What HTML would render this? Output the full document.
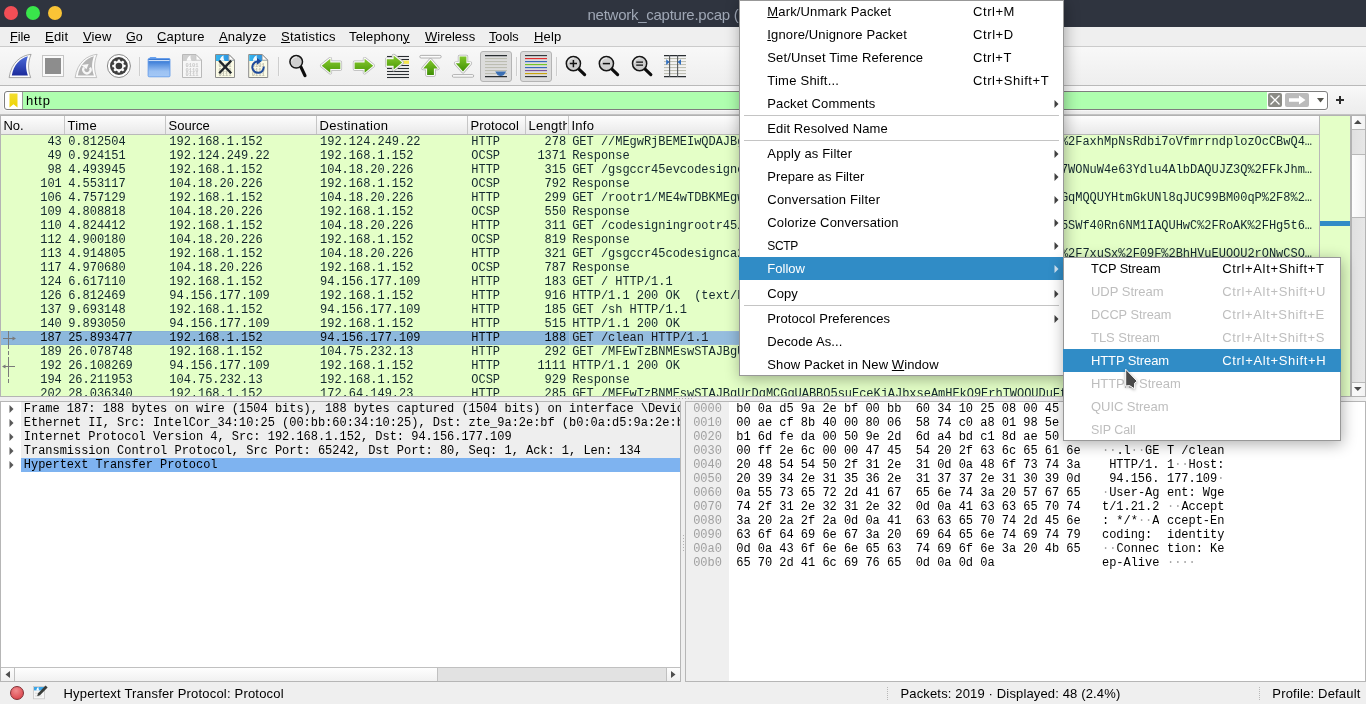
<!DOCTYPE html>
<html><head><meta charset="utf-8"><title>Wireshark</title>
<style>
html,body{margin:0;padding:0}
body{width:1366px;height:704px;overflow:hidden;position:relative;background:#efefef;will-change:transform;font-family:"Liberation Sans",sans-serif;font-size:13px;color:#000}
div,span,svg{position:absolute;box-sizing:border-box}
.t{white-space:pre;line-height:16px;height:16px}
.t u{text-decoration:underline;text-underline-offset:1px;text-decoration-thickness:1px}
.m{font-family:"Liberation Mono",monospace;font-size:12px;letter-spacing:-0.027px;line-height:14px;height:14px;white-space:pre;overflow:hidden}
.row{left:1px;width:1318px;height:14px;background:#e4ffc7;color:#12272e}
.row .m{top:0}
.m i{font-style:normal;color:#a4a4a4}
.hd{top:0;height:18px;border-right:1px solid #c4c4c4}
</style></head><body>

<div style="left:0;top:0;width:1366px;height:27px;background:#2f343f"></div>
<div style="left:4px;top:6px;width:14px;height:14px;border-radius:7px;background:#f24e56"></div>
<div style="left:26px;top:6px;width:14px;height:14px;border-radius:7px;background:#39e64b"></div>
<div style="left:48px;top:6px;width:14px;height:14px;border-radius:7px;background:#fac436"></div>
<div class="t" style="left:587.5px;top:5px;font-size:15px;line-height:20px;height:20px;letter-spacing:-0.263px;color:#9fa7b5">network_capture.pcap (</div>
<div style="left:0;top:27px;width:1366px;height:19px;background:#efefef"></div>
<div style="left:0;top:46px;width:1366px;height:1px;background:#cbcbcb"></div>
<div class="t" style="left:10.00px;top:28.50px;font-size:12.75px;letter-spacing:-0.113px;color:#000;"><u>F</u>ile</div>
<div class="t" style="left:45.00px;top:28.50px;letter-spacing:0.207px;color:#000;"><u>E</u>dit</div>
<div class="t" style="left:83.00px;top:28.50px;letter-spacing:0.129px;color:#000;"><u>V</u>iew</div>
<div class="t" style="left:126.00px;top:29.00px;font-size:12.5px;letter-spacing:-0.016px;color:#000;"><u>G</u>o</div>
<div class="t" style="left:157.00px;top:28.50px;letter-spacing:0.210px;color:#000;"><u>C</u>apture</div>
<div class="t" style="left:219.00px;top:28.50px;letter-spacing:0.147px;color:#000;"><u>A</u>nalyze</div>
<div class="t" style="left:281.00px;top:28.50px;letter-spacing:0.283px;color:#000;"><u>S</u>tatistics</div>
<div class="t" style="left:349.00px;top:28.50px;letter-spacing:0.156px;color:#000;">Telephon<u>y</u></div>
<div class="t" style="left:425.00px;top:28.50px;letter-spacing:0.045px;color:#000;"><u>W</u>ireless</div>
<div class="t" style="left:489.00px;top:28.50px;font-size:12.75px;letter-spacing:-0.041px;color:#000;"><u>T</u>ools</div>
<div class="t" style="left:534.00px;top:28.50px;letter-spacing:0.156px;color:#000;"><u>H</u>elp</div>
<div style="left:0;top:47px;width:1366px;height:38px;background:linear-gradient(#f8f8f8,#eeeeee)"></div>
<div style="left:0;top:85px;width:1366px;height:1px;background:#b9b9b9"></div>
<svg style="left:0;top:47px" width="700" height="38" viewBox="0 47 700 38"><defs><linearGradient id="gb" x1="0" y1="0" x2="0" y2="1"><stop offset="0" stop-color="#4b6ad8"/><stop offset="1" stop-color="#1b2b9c"/></linearGradient><linearGradient id="gf" x1="0" y1="0" x2="0" y2="1"><stop offset="0" stop-color="#3b7ad4"/><stop offset="0.16" stop-color="#3d7ed8"/><stop offset="0.7" stop-color="#9cc2f3"/><stop offset="1" stop-color="#a4c8f6"/></linearGradient><linearGradient id="ga" x1="0" y1="0" x2="0" y2="1"><stop offset="0" stop-color="#86c92e"/><stop offset="1" stop-color="#4c9a08"/></linearGradient><linearGradient id="gv" x1="0" y1="0" x2="0" y2="1"><stop offset="0" stop-color="#7fc62a"/><stop offset="1" stop-color="#3f8f05"/></linearGradient><linearGradient id="gh" x1="0" y1="0" x2="1" y2="0"><stop offset="0" stop-color="#35b6ee"/><stop offset="1" stop-color="#2a86dc"/></linearGradient></defs><path d="M31.1 54.3 C21 55.5 11.5 62 9.1 77.6 L30.7 77.6 C27.8 70 27.8 62 31.1 54.3Z" fill="#fcfcfc" stroke="#8f8f8f" stroke-width="0.8"/><path d="M27.9 56.3 C20 58.5 13.6 65 11.8 75.4 L27.9 75.4 C25.6 69 25.4 63 27.9 56.3Z" fill="url(#gb)"/><rect x="42.5" y="55.5" width="21" height="21" fill="#fafafa" stroke="#c4c4c4" stroke-width="1"/><rect x="45" y="58" width="16" height="16" fill="#8d8d8d"/><path d="M97.1 54.3 C87 55.5 77.5 62 75.1 77.6 L96.7 77.6 C93.8 70 93.8 62 97.1 54.3Z" fill="#fcfcfc" stroke="#b4b4b4" stroke-width="0.8"/><path d="M93.9 56.3 C86 58.5 79.6 65 77.8 75.4 L93.9 75.4 C91.6 69 91.4 63 93.9 56.3Z" fill="#b4b4b4"/><path d="M90.0 67.6A3.7 3.7 0 1 1 83.9 67.5" fill="none" stroke="#f8f8f8" stroke-width="2.2"/><path d="M81.4 65.1L88.6 63.9L86.5 69.2z" fill="#f8f8f8"/><circle cx="118.9" cy="66" r="11.5" fill="#fdfdfd" stroke="#7c7c7c" stroke-width="0.9"/><circle cx="118.9" cy="66" r="8.9" fill="#3f3f3f"/><rect x="117.65" y="59.4" width="2.5" height="3" rx="0.5" fill="#fafafa" transform="rotate(0 118.9 66)"/><rect x="117.65" y="59.4" width="2.5" height="3" rx="0.5" fill="#fafafa" transform="rotate(45 118.9 66)"/><rect x="117.65" y="59.4" width="2.5" height="3" rx="0.5" fill="#fafafa" transform="rotate(90 118.9 66)"/><rect x="117.65" y="59.4" width="2.5" height="3" rx="0.5" fill="#fafafa" transform="rotate(135 118.9 66)"/><rect x="117.65" y="59.4" width="2.5" height="3" rx="0.5" fill="#fafafa" transform="rotate(180 118.9 66)"/><rect x="117.65" y="59.4" width="2.5" height="3" rx="0.5" fill="#fafafa" transform="rotate(225 118.9 66)"/><rect x="117.65" y="59.4" width="2.5" height="3" rx="0.5" fill="#fafafa" transform="rotate(270 118.9 66)"/><rect x="117.65" y="59.4" width="2.5" height="3" rx="0.5" fill="#fafafa" transform="rotate(315 118.9 66)"/><circle cx="118.9" cy="66" r="5.2" fill="#fafafa"/><circle cx="118.9" cy="66" r="3.3" fill="#3a3a3a"/><path d="M139.5 57v19" stroke="#cecece" stroke-width="1"/><path d="M140.5 57v19" stroke="#f6f6f6" stroke-width="1"/><path d="M149.6 58.6v-0.6q0-0.9 0.9-0.9h5q0.9 0 0.9 0.9v0.6z" fill="#6aa3ee"/><rect x="148.1" y="58.5" width="21.9" height="18.3" rx="1" fill="url(#gf)" stroke="#5b97ea" stroke-width="0.8"/><path d="M148.6 60.6h20.9" stroke="#eef5fd" stroke-width="0.9"/><path d="M182.5 54.5h13.5l5.5 5.5v17.5h-19z" fill="#f6f6f6" stroke="#b9b9b9" stroke-width="1"/><path d="M183 55h13l0 5.5h5v-0.3l-5.3-5.2z" fill="none"/><path d="M183 55h12.8v5.7h5.2v0.3h-18z" fill="#cfcfcf"/><path d="M196 54.8v5.4h5.4z" fill="#fdfdfd" stroke="#b9b9b9" stroke-width="0.7"/><path d="M190.5 55.2c-2.2 1-3.4 3-3.9 5.6h5c-1-1.8-1.2-3.6-1.1-5.6z" fill="#fff" opacity="0.95"/><text x="185.6" y="67.2" font-family="Liberation Mono" font-size="5.2" font-weight="bold" fill="#c8c8c8" textLength="13" lengthAdjust="spacingAndGlyphs">0101</text><text x="185.6" y="71.8" font-family="Liberation Mono" font-size="5.2" font-weight="bold" fill="#c8c8c8" textLength="13" lengthAdjust="spacingAndGlyphs">0110</text><text x="185.6" y="76.4" font-family="Liberation Mono" font-size="5.2" font-weight="bold" fill="#c8c8c8" textLength="13" lengthAdjust="spacingAndGlyphs">0111</text><path d="M215.5 54.5h13.5l5.5 5.5v17.5h-19z" fill="#fbfbe6" stroke="#8a8a8a" stroke-width="1"/><path d="M216 55h13l0 5.5h5v-0.3l-5.3-5.2z" fill="none"/><path d="M216 55h12.8v5.7h5.2v0.3h-18z" fill="url(#gh)"/><path d="M229 54.8v5.4h5.4z" fill="#fdfdfd" stroke="#8a8a8a" stroke-width="0.7"/><path d="M223.5 55.2c-2.2 1-3.4 3-3.9 5.6h5c-1-1.8-1.2-3.6-1.1-5.6z" fill="#fff" opacity="0.95"/><text x="218.6" y="67.2" font-family="Liberation Mono" font-size="5.2" font-weight="bold" fill="#b8b8a8" textLength="13" lengthAdjust="spacingAndGlyphs">0101</text><text x="218.6" y="71.8" font-family="Liberation Mono" font-size="5.2" font-weight="bold" fill="#b8b8a8" textLength="13" lengthAdjust="spacingAndGlyphs">0110</text><text x="218.6" y="76.4" font-family="Liberation Mono" font-size="5.2" font-weight="bold" fill="#b8b8a8" textLength="13" lengthAdjust="spacingAndGlyphs">0111</text><path d="M219.2 60.6l12 12.6M231.2 60.6l-12 12.6" stroke="#20262b" stroke-width="2.3"/><path d="M248.7 54.5h13.5l5.5 5.5v17.5h-19z" fill="#fbfbe6" stroke="#8a8a8a" stroke-width="1"/><path d="M249.2 55h13l0 5.5h5v-0.3l-5.3-5.2z" fill="none"/><path d="M249.2 55h12.8v5.7h5.2v0.3h-18z" fill="url(#gh)"/><path d="M262.2 54.8v5.4h5.4z" fill="#fdfdfd" stroke="#8a8a8a" stroke-width="0.7"/><path d="M256.7 55.2c-2.2 1-3.4 3-3.9 5.6h5c-1-1.8-1.2-3.6-1.1-5.6z" fill="#fff" opacity="0.95"/><text x="251.79999999999998" y="67.2" font-family="Liberation Mono" font-size="5.2" font-weight="bold" fill="#b8b8a8" textLength="13" lengthAdjust="spacingAndGlyphs">0101</text><text x="251.79999999999998" y="71.8" font-family="Liberation Mono" font-size="5.2" font-weight="bold" fill="#b8b8a8" textLength="13" lengthAdjust="spacingAndGlyphs">0110</text><text x="251.79999999999998" y="76.4" font-family="Liberation Mono" font-size="5.2" font-weight="bold" fill="#b8b8a8" textLength="13" lengthAdjust="spacingAndGlyphs">0111</text><path d="M263.7 66.6A5.7 5.7 0 1 1 257.4 61.5" fill="none" stroke="#1d4a9c" stroke-width="2"/><path d="M257 58.1l4.6 3.2-4.6 3.4z" fill="#1d4a9c"/><path d="M278.5 57v19" stroke="#cecece" stroke-width="1"/><path d="M279.5 57v19" stroke="#f6f6f6" stroke-width="1"/><path d="M300.61 66.34L305 75.6" stroke="#0c0c0c" stroke-width="3.2" stroke-linecap="round"/><circle cx="296.2" cy="61.8" r="6.3" fill="#cfcfcf" stroke="#151515" stroke-width="1.5"/><path d="M291.70 61.20a4.50 4.50 0 0 1 5.30 -4.10" fill="none" stroke="#f2f2f2" stroke-width="1" opacity="0.9"/><path d="M340.30 62.40 L330.30 62.40 L330.30 58.70 L321.70 65.70 L330.30 72.70 L330.30 69.00 L340.30 69.00Z" fill="none" stroke="#b5b5b5" stroke-width="3.6" stroke-linejoin="round"/><path d="M340.30 62.40 L330.30 62.40 L330.30 58.70 L321.70 65.70 L330.30 72.70 L330.30 69.00 L340.30 69.00Z" fill="url(#ga)" stroke="#fafafa" stroke-width="2.2" stroke-linejoin="round"/><path d="M340.30 62.40 L330.30 62.40 L330.30 58.70 L321.70 65.70 L330.30 72.70 L330.30 69.00 L340.30 69.00Z" fill="url(#ga)"/><path d="M354.60 62.40 L364.60 62.40 L364.60 58.70 L373.20 65.70 L364.60 72.70 L364.60 69.00 L354.60 69.00Z" fill="none" stroke="#b5b5b5" stroke-width="3.6" stroke-linejoin="round"/><path d="M354.60 62.40 L364.60 62.40 L364.60 58.70 L373.20 65.70 L364.60 72.70 L364.60 69.00 L354.60 69.00Z" fill="url(#ga)" stroke="#fafafa" stroke-width="2.2" stroke-linejoin="round"/><path d="M354.60 62.40 L364.60 62.40 L364.60 58.70 L373.20 65.70 L364.60 72.70 L364.60 69.00 L354.60 69.00Z" fill="url(#ga)"/><path d="M387 56.5h22" stroke="#2a2e32" stroke-width="1.1"/><path d="M387 59.5h22" stroke="#2a2e32" stroke-width="1.1"/><path d="M387 62.5h22" stroke="#2a2e32" stroke-width="1.1"/><path d="M387 65.5h22" stroke="#2a2e32" stroke-width="1.1"/><path d="M387 68.5h22" stroke="#2a2e32" stroke-width="1.1"/><path d="M387 71.5h22" stroke="#2a2e32" stroke-width="1.1"/><path d="M387 74.5h22" stroke="#2a2e32" stroke-width="1.1"/><path d="M387 77.5h22" stroke="#2a2e32" stroke-width="1.1"/><rect x="401" y="60.6" width="8" height="3.2" fill="#f5e54a"/><path d="M386.80 59.20 L393.60 59.20 L393.60 55.50 L402.20 62.50 L393.60 69.50 L393.60 65.80 L386.80 65.80Z" fill="none" stroke="#b5b5b5" stroke-width="3.6" stroke-linejoin="round"/><path d="M386.80 59.20 L393.60 59.20 L393.60 55.50 L402.20 62.50 L393.60 69.50 L393.60 65.80 L386.80 65.80Z" fill="url(#ga)" stroke="#fafafa" stroke-width="2.2" stroke-linejoin="round"/><path d="M386.80 59.20 L393.60 59.20 L393.60 55.50 L402.20 62.50 L393.60 69.50 L393.60 65.80 L386.80 65.80Z" fill="url(#ga)"/><rect x="419.8" y="55.4" width="21.4" height="2.6" rx="1.3" fill="#fcfcfc" stroke="#9e9e9e" stroke-width="0.8"/><path d="M427.10 75.00 L427.10 68.40 L423.20 68.40 L430.50 60.00 L437.80 68.40 L433.90 68.40 L433.90 75.00Z" fill="none" stroke="#b0b0b0" stroke-width="3.6" stroke-linejoin="round"/><path d="M427.10 75.00 L427.10 68.40 L423.20 68.40 L430.50 60.00 L437.80 68.40 L433.90 68.40 L433.90 75.00Z" fill="url(#gv)" stroke="#fafafa" stroke-width="2.2" stroke-linejoin="round"/><path d="M427.10 75.00 L427.10 68.40 L423.20 68.40 L430.50 60.00 L437.80 68.40 L433.90 68.40 L433.90 75.00Z" fill="url(#gv)"/><rect x="452.3" y="74.6" width="21.4" height="2.6" rx="1.3" fill="#fcfcfc" stroke="#9e9e9e" stroke-width="0.8"/><path d="M459.60 56.60 L459.60 63.20 L455.70 63.20 L463.00 71.60 L470.30 63.20 L466.40 63.20 L466.40 56.60Z" fill="none" stroke="#b0b0b0" stroke-width="3.6" stroke-linejoin="round"/><path d="M459.60 56.60 L459.60 63.20 L455.70 63.20 L463.00 71.60 L470.30 63.20 L466.40 63.20 L466.40 56.60Z" fill="url(#gv)" stroke="#fafafa" stroke-width="2.2" stroke-linejoin="round"/><path d="M459.60 56.60 L459.60 63.20 L455.70 63.20 L463.00 71.60 L470.30 63.20 L466.40 63.20 L466.40 56.60Z" fill="url(#gv)"/><rect x="480.5" y="51.5" width="31" height="30" rx="2.5" fill="#dcdcdc" stroke="#b4b4b4" stroke-width="1"/><path d="M485 55.6h22M485 76.6h22" stroke="#2a2e32" stroke-width="1.1"/><path d="M485 58.6h22" stroke="#b9baae" stroke-width="1"/><path d="M485 61.6h22" stroke="#b9baae" stroke-width="1"/><path d="M485 64.6h22" stroke="#b9baae" stroke-width="1"/><path d="M485 67.6h22" stroke="#b9baae" stroke-width="1"/><path d="M485 70.6h22" stroke="#b9baae" stroke-width="1"/><path d="M485 73.6h22" stroke="#b9baae" stroke-width="1"/><path d="M495.2 71.4h11l-2.4 3.6q-3.1 2-6.2 0z" fill="#3a6fb4"/><path d="M516.5 57v19" stroke="#cecece" stroke-width="1"/><path d="M517.5 57v19" stroke="#f6f6f6" stroke-width="1"/><rect x="520.5" y="51.5" width="31" height="30" rx="2.5" fill="#dcdcdc" stroke="#b4b4b4" stroke-width="1"/><path d="M525 55.6h22" stroke="#2a2e32" stroke-width="1.1"/><path d="M525 58.6h22" stroke="#e02424" stroke-width="1.1"/><path d="M525 61.6h22" stroke="#2f62b8" stroke-width="1.1"/><path d="M525 64.6h22" stroke="#6cc41c" stroke-width="1.1"/><path d="M525 67.6h22" stroke="#2f62b8" stroke-width="1.1"/><path d="M525 70.6h22" stroke="#774c98" stroke-width="1.1"/><path d="M525 73.6h22" stroke="#c8a000" stroke-width="1.1"/><path d="M525 76.6h22" stroke="#2a2e32" stroke-width="1.1"/><path d="M556.5 57v19" stroke="#cecece" stroke-width="1"/><path d="M557.5 57v19" stroke="#f6f6f6" stroke-width="1"/><path d="M578.37 68.71L584.6 74.6" stroke="#0c0c0c" stroke-width="3.2" stroke-linecap="round"/><circle cx="573.4" cy="63.6" r="7.1" fill="#cfcfcf" stroke="#151515" stroke-width="1.5"/><path d="M568.10 63.00a5.30 5.30 0 0 1 6.10 -4.90" fill="none" stroke="#f2f2f2" stroke-width="1" opacity="0.9"/><path d="M569.8 63.6h7.2M573.4 60.0v7.2" stroke="#111" stroke-width="1.5"/><path d="M611.37 68.71L617.6 74.6" stroke="#0c0c0c" stroke-width="3.2" stroke-linecap="round"/><circle cx="606.4" cy="63.6" r="7.1" fill="#cfcfcf" stroke="#151515" stroke-width="1.5"/><path d="M601.10 63.00a5.30 5.30 0 0 1 6.10 -4.90" fill="none" stroke="#f2f2f2" stroke-width="1" opacity="0.9"/><path d="M602.8 63.6h7.2" stroke="#111" stroke-width="1.5"/><path d="M644.57 68.71L650.8 74.6" stroke="#0c0c0c" stroke-width="3.2" stroke-linecap="round"/><circle cx="639.6" cy="63.6" r="7.1" fill="#cfcfcf" stroke="#151515" stroke-width="1.5"/><path d="M634.30 63.00a5.30 5.30 0 0 1 6.10 -4.90" fill="none" stroke="#f2f2f2" stroke-width="1" opacity="0.9"/><path d="M636.2 62.1h6.8M636.2 65.1h6.8" stroke="#111" stroke-width="1.4"/><path d="M664 55.6h22M664 76.6h22" stroke="#2a2e32" stroke-width="1.1"/><path d="M664 58.6h22" stroke="#b9baae" stroke-width="1"/><path d="M664 61.6h22" stroke="#b9baae" stroke-width="1"/><path d="M664 64.6h22" stroke="#b9baae" stroke-width="1"/><path d="M664 67.6h22" stroke="#b9baae" stroke-width="1"/><path d="M664 70.6h22" stroke="#b9baae" stroke-width="1"/><path d="M664 73.6h22" stroke="#b9baae" stroke-width="1"/><path d="M669.6 55v22M677.6 55v22" stroke="#55595c" stroke-width="1.1"/><path d="M666.2 59.2l3.4 2.9-3.4 2.9zM681 59.2l-3.4 2.9 3.4 2.9z" fill="#2f6ec0"/></svg>
<div style="left:0;top:86px;width:1366px;height:28px;background:linear-gradient(#f9f9f9,#f3f3f3 40%,#ededed)"></div>
<div style="left:4px;top:91px;width:1324px;height:19px;border:1px solid #7e7e7e;border-radius:3px;background:#fff;overflow:hidden;box-shadow:0 0 0 1px rgba(255,255,255,0.55)"><div style="left:17px;top:0;width:1px;height:18px;background:#9a9a9a"></div><div style="left:18px;top:0;width:1244px;height:18px;background:#afffaf"></div><svg style="left:3.6px;top:1px" width="9" height="15" viewBox="0 0 9 15"><defs><linearGradient id="bk" x1="0" y1="0" x2="0" y2="1"><stop offset="0" stop-color="#f3de30"/><stop offset="1" stop-color="#efd300"/></linearGradient></defs><path d="M0.5 0.5h8v14l-4-3.2-4 3.2z" fill="url(#bk)"/></svg><div style="left:1263px;top:1px;width:14px;height:14px;border-radius:2px;background:#8b8b85"></div><svg style="left:1263px;top:1px" width="14" height="14" viewBox="0 0 14 14"><path d="M2.5 2.5l9 9M11.5 2.5l-9 9" stroke="#fff" stroke-width="1.3" fill="none"/></svg><div style="left:1280px;top:1px;width:24px;height:14px;border-radius:2px;background:#bbbbbb"></div><svg style="left:1280px;top:1px" width="24" height="14" viewBox="0 0 24 14"><path d="M4 5.2h10v-2.8l6.5 4.6-6.5 4.6v-2.8h-10z" fill="#fff"/></svg><svg style="left:1312px;top:6px" width="7" height="5" viewBox="0 0 7 5"><path d="M0 0h7l-3.5 4.4z" fill="#55554e"/></svg></div>
<div class="t" style="left:26.00px;top:92.50px;letter-spacing:0.738px;color:#000;">http</div>
<svg style="left:1336px;top:96px" width="8" height="8" viewBox="0 0 8 8"><path d="M4 0v8M0 4h8" stroke="#2e2e2e" stroke-width="2"/></svg>
<div style="left:0;top:114px;width:1366px;height:283px;background:#e4ffc7;border:1px solid #b4b4b4;border-top:none"></div>
<div style="left:0;top:114px;width:1366px;height:1px;background:#c2c2c2"></div>
<div style="left:0;top:115px;width:1366px;height:1px;background:#b2b2b2"></div>
<div style="left:1px;top:116px;width:1319px;height:19px;background:linear-gradient(#fdfdfd,#f3f3f3 50%,#e9e9e9);border-bottom:1px solid #b9b9b9"></div>
<div style="left:64px;top:116px;width:1px;height:18px;background:#c6c6c6"></div>
<div class="t" style="left:3.50px;top:117.50px;letter-spacing:-0.099px;color:#000;">No.</div>
<div style="left:165px;top:116px;width:1px;height:18px;background:#c6c6c6"></div>
<div class="t" style="left:67.50px;top:117.50px;letter-spacing:0.238px;color:#000;">Time</div>
<div style="left:316px;top:116px;width:1px;height:18px;background:#c6c6c6"></div>
<div class="t" style="left:168.50px;top:117.50px;letter-spacing:0.005px;color:#000;">Source</div>
<div style="left:467px;top:116px;width:1px;height:18px;background:#c6c6c6"></div>
<div class="t" style="left:319.50px;top:117.50px;letter-spacing:0.345px;color:#000;">Destination</div>
<div style="left:525px;top:116px;width:1px;height:18px;background:#c6c6c6"></div>
<div class="t" style="left:470.50px;top:117.50px;letter-spacing:0.082px;color:#000;">Protocol</div>
<div style="left:568px;top:116px;width:1px;height:18px;background:#c6c6c6"></div>
<div style="left:526px;top:116px;width:41px;height:19px;overflow:hidden"><div class="t" style="left:2.50px;top:1.50px;letter-spacing:0.273px;color:#000;">Length</div></div>
<div style="left:1319px;top:116px;width:1px;height:18px;background:#c6c6c6"></div>
<div class="t" style="left:571.50px;top:117.50px;letter-spacing:0.258px;color:#000;">Info</div>
<div class="row" style="top:135px;height:14px;overflow:hidden;">
<span class="m" style="left:0;width:60.8px;text-align:right">43</span>
<span class="m" style="left:67.2px">0.812504</span>
<span class="m" style="left:168.3px">192.168.1.152</span>
<span class="m" style="left:319.1px">192.124.249.22</span>
<span class="m" style="left:470.3px">HTTP</span>
<span class="m" style="left:520px;width:45.1px;text-align:right">278</span>
<span class="m" style="left:571.2px;width:480px">GET //MEgwRjBEMEIwQDAJBgUrDgMCGgUABBTfqhLjKLEJQZPin0KCzkdAQpVYowQUsT7DaQP4v0cB1Jg</span>
<span class="m" style="left:900px;width:411px;text-align:right">%2FaxhMpNsRdbi7oVfmrrndplozOcCBwQ4…</span>
</div>
<div class="row" style="top:149px;height:14px;overflow:hidden;">
<span class="m" style="left:0;width:60.8px;text-align:right">49</span>
<span class="m" style="left:67.2px">0.924151</span>
<span class="m" style="left:168.3px">192.124.249.22</span>
<span class="m" style="left:319.1px">192.168.1.152</span>
<span class="m" style="left:470.3px">OCSP</span>
<span class="m" style="left:520px;width:45.1px;text-align:right">1371</span>
<span class="m" style="left:571.2px;width:740px">Response</span>
</div>
<div class="row" style="top:163px;height:14px;overflow:hidden;">
<span class="m" style="left:0;width:60.8px;text-align:right">98</span>
<span class="m" style="left:67.2px">4.493945</span>
<span class="m" style="left:168.3px">192.168.1.152</span>
<span class="m" style="left:319.1px">104.18.20.226</span>
<span class="m" style="left:470.3px">HTTP</span>
<span class="m" style="left:520px;width:45.1px;text-align:right">315</span>
<span class="m" style="left:571.2px;width:480px">GET /gsgccr45evcodesignca2020/ME0wSzBJMEcwRTAJBgUrDgMCGgUABBQaCbVYh07WONuW4e63Ydlu</span>
<span class="m" style="left:900px;width:411px;text-align:right">7WONuW4e63Ydlu4AlbDAQUJZ3Q%2FFkJhm…</span>
</div>
<div class="row" style="top:177px;height:14px;overflow:hidden;">
<span class="m" style="left:0;width:60.8px;text-align:right">101</span>
<span class="m" style="left:67.2px">4.553117</span>
<span class="m" style="left:168.3px">104.18.20.226</span>
<span class="m" style="left:319.1px">192.168.1.152</span>
<span class="m" style="left:470.3px">OCSP</span>
<span class="m" style="left:520px;width:45.1px;text-align:right">792</span>
<span class="m" style="left:571.2px;width:740px">Response</span>
</div>
<div class="row" style="top:191px;height:14px;overflow:hidden;">
<span class="m" style="left:0;width:60.8px;text-align:right">106</span>
<span class="m" style="left:67.2px">4.757129</span>
<span class="m" style="left:168.3px">192.168.1.152</span>
<span class="m" style="left:319.1px">104.18.20.226</span>
<span class="m" style="left:470.3px">HTTP</span>
<span class="m" style="left:520px;width:45.1px;text-align:right">299</span>
<span class="m" style="left:571.2px;width:480px">GET /rootr1/ME4wTDBKMEgwRjAJBgUrDgMCGgUABBS3V7W2nAf4FiMTjpDJKg6%2BMgGqMQQUYHtmGkUNl8q</span>
<span class="m" style="left:900px;width:411px;text-align:right">GqMQQUYHtmGkUNl8qJUC99BM00qP%2F8%2…</span>
</div>
<div class="row" style="top:205px;height:14px;overflow:hidden;">
<span class="m" style="left:0;width:60.8px;text-align:right">109</span>
<span class="m" style="left:67.2px">4.808818</span>
<span class="m" style="left:168.3px">104.18.20.226</span>
<span class="m" style="left:319.1px">192.168.1.152</span>
<span class="m" style="left:470.3px">OCSP</span>
<span class="m" style="left:520px;width:45.1px;text-align:right">550</span>
<span class="m" style="left:571.2px;width:740px">Response</span>
</div>
<div class="row" style="top:219px;height:14px;overflow:hidden;">
<span class="m" style="left:0;width:60.8px;text-align:right">110</span>
<span class="m" style="left:67.2px">4.824412</span>
<span class="m" style="left:168.3px">192.168.1.152</span>
<span class="m" style="left:319.1px">104.18.20.226</span>
<span class="m" style="left:470.3px">HTTP</span>
<span class="m" style="left:520px;width:45.1px;text-align:right">311</span>
<span class="m" style="left:571.2px;width:480px">GET /codesigningrootr45/MFEwTzBNMEswSTAJBgUrDgMCGgUABBQVFZP5vqhCrtRN5SWf40Rn6NM1IAQU</span>
<span class="m" style="left:900px;width:411px;text-align:right">5SWf40Rn6NM1IAQUHwC%2FRoAK%2FHg5t6…</span>
</div>
<div class="row" style="top:233px;height:14px;overflow:hidden;">
<span class="m" style="left:0;width:60.8px;text-align:right">112</span>
<span class="m" style="left:67.2px">4.900180</span>
<span class="m" style="left:168.3px">104.18.20.226</span>
<span class="m" style="left:319.1px">192.168.1.152</span>
<span class="m" style="left:470.3px">OCSP</span>
<span class="m" style="left:520px;width:45.1px;text-align:right">819</span>
<span class="m" style="left:571.2px;width:740px">Response</span>
</div>
<div class="row" style="top:247px;height:14px;overflow:hidden;">
<span class="m" style="left:0;width:60.8px;text-align:right">113</span>
<span class="m" style="left:67.2px">4.914805</span>
<span class="m" style="left:168.3px">192.168.1.152</span>
<span class="m" style="left:319.1px">104.18.20.226</span>
<span class="m" style="left:470.3px">HTTP</span>
<span class="m" style="left:520px;width:45.1px;text-align:right">321</span>
<span class="m" style="left:571.2px;width:480px">GET /gsgccr45codesignca2020/MFEwTzBNMEswSTAJBgUrDgMCGgUABBTLuA3ygnKW%2F7xuSx%2F09F</span>
<span class="m" style="left:900px;width:411px;text-align:right">%2F7xuSx%2F09F%2BhHVuEUOOU2rONwCSO…</span>
</div>
<div class="row" style="top:261px;height:14px;overflow:hidden;">
<span class="m" style="left:0;width:60.8px;text-align:right">117</span>
<span class="m" style="left:67.2px">4.970680</span>
<span class="m" style="left:168.3px">104.18.20.226</span>
<span class="m" style="left:319.1px">192.168.1.152</span>
<span class="m" style="left:470.3px">OCSP</span>
<span class="m" style="left:520px;width:45.1px;text-align:right">787</span>
<span class="m" style="left:571.2px;width:740px">Response</span>
</div>
<div class="row" style="top:275px;height:14px;overflow:hidden;">
<span class="m" style="left:0;width:60.8px;text-align:right">124</span>
<span class="m" style="left:67.2px">6.617110</span>
<span class="m" style="left:168.3px">192.168.1.152</span>
<span class="m" style="left:319.1px">94.156.177.109</span>
<span class="m" style="left:470.3px">HTTP</span>
<span class="m" style="left:520px;width:45.1px;text-align:right">183</span>
<span class="m" style="left:571.2px;width:740px">GET / HTTP/1.1</span>
</div>
<div class="row" style="top:289px;height:14px;overflow:hidden;">
<span class="m" style="left:0;width:60.8px;text-align:right">126</span>
<span class="m" style="left:67.2px">6.812469</span>
<span class="m" style="left:168.3px">94.156.177.109</span>
<span class="m" style="left:319.1px">192.168.1.152</span>
<span class="m" style="left:470.3px">HTTP</span>
<span class="m" style="left:520px;width:45.1px;text-align:right">916</span>
<span class="m" style="left:571.2px;width:740px">HTTP/1.1 200 OK  (text/html)</span>
</div>
<div class="row" style="top:303px;height:14px;overflow:hidden;">
<span class="m" style="left:0;width:60.8px;text-align:right">137</span>
<span class="m" style="left:67.2px">9.693148</span>
<span class="m" style="left:168.3px">192.168.1.152</span>
<span class="m" style="left:319.1px">94.156.177.109</span>
<span class="m" style="left:470.3px">HTTP</span>
<span class="m" style="left:520px;width:45.1px;text-align:right">185</span>
<span class="m" style="left:571.2px;width:740px">GET /sh HTTP/1.1</span>
</div>
<div class="row" style="top:317px;height:14px;overflow:hidden;">
<span class="m" style="left:0;width:60.8px;text-align:right">140</span>
<span class="m" style="left:67.2px">9.893050</span>
<span class="m" style="left:168.3px">94.156.177.109</span>
<span class="m" style="left:319.1px">192.168.1.152</span>
<span class="m" style="left:470.3px">HTTP</span>
<span class="m" style="left:520px;width:45.1px;text-align:right">515</span>
<span class="m" style="left:571.2px;width:740px">HTTP/1.1 200 OK</span>
</div>
<div class="row" style="top:331px;height:14px;overflow:hidden;background:#8db8dc;color:#06090c;box-shadow:inset 0 1px 0 #88b1d5, inset 0 -1px 0 #88b1d5;">
<span class="m" style="left:0;width:60.8px;text-align:right">187</span>
<span class="m" style="left:67.2px">25.893477</span>
<span class="m" style="left:168.3px">192.168.1.152</span>
<span class="m" style="left:319.1px">94.156.177.109</span>
<span class="m" style="left:470.3px">HTTP</span>
<span class="m" style="left:520px;width:45.1px;text-align:right">188</span>
<span class="m" style="left:571.2px;width:740px">GET /clean HTTP/1.1</span>
</div>
<div class="row" style="top:345px;height:14px;overflow:hidden;">
<span class="m" style="left:0;width:60.8px;text-align:right">189</span>
<span class="m" style="left:67.2px">26.078748</span>
<span class="m" style="left:168.3px">192.168.1.152</span>
<span class="m" style="left:319.1px">104.75.232.13</span>
<span class="m" style="left:470.3px">HTTP</span>
<span class="m" style="left:520px;width:45.1px;text-align:right">292</span>
<span class="m" style="left:571.2px;width:740px">GET /MFEwTzBNMEswSTAJBgUrDgMCGgUABBTBL0V27RVZ7LBduom%2FnYB45SPUEwQU5Z1ZMIJHWMys</span>
</div>
<div class="row" style="top:359px;height:14px;overflow:hidden;">
<span class="m" style="left:0;width:60.8px;text-align:right">192</span>
<span class="m" style="left:67.2px">26.108269</span>
<span class="m" style="left:168.3px">94.156.177.109</span>
<span class="m" style="left:319.1px">192.168.1.152</span>
<span class="m" style="left:470.3px">HTTP</span>
<span class="m" style="left:520px;width:45.1px;text-align:right">1111</span>
<span class="m" style="left:571.2px;width:740px">HTTP/1.1 200 OK</span>
</div>
<div class="row" style="top:373px;height:14px;overflow:hidden;">
<span class="m" style="left:0;width:60.8px;text-align:right">194</span>
<span class="m" style="left:67.2px">26.211953</span>
<span class="m" style="left:168.3px">104.75.232.13</span>
<span class="m" style="left:319.1px">192.168.1.152</span>
<span class="m" style="left:470.3px">OCSP</span>
<span class="m" style="left:520px;width:45.1px;text-align:right">929</span>
<span class="m" style="left:571.2px;width:740px">Response</span>
</div>
<div class="row" style="top:387px;height:9px;overflow:hidden;">
<span class="m" style="left:0;width:60.8px;text-align:right">202</span>
<span class="m" style="left:67.2px">28.036340</span>
<span class="m" style="left:168.3px">192.168.1.152</span>
<span class="m" style="left:319.1px">172.64.149.23</span>
<span class="m" style="left:470.3px">HTTP</span>
<span class="m" style="left:520px;width:45.1px;text-align:right">285</span>
<span class="m" style="left:571.2px;width:740px">GET /MFEwTzBNMEswSTAJBgUrDgMCGgUABBQ5suEceKjAJbxseAmHEkQ9ErhTWOQUDuFtqbcFfXwLdsdfhKjm3nVbQzXcVbNmLkJhGf</span>
</div>
<div style="left:569px;top:331px;width:750px;height:14px;background:rgba(255,255,255,0.07);border:1px solid rgba(255,255,255,0.13)"></div>
<svg style="left:1px;top:331px" width="20" height="56" viewBox="0 0 20 56"><path d="M7.5 0v14M7.5 28v14" stroke="#7a7a7a" stroke-width="1" fill="none"/><path d="M7.5 14v14M7.5 42v12" stroke="#7a7a7a" stroke-width="1" stroke-dasharray="4 2" fill="none"/><path d="M2 7.5h11" stroke="#7a7a7a" stroke-width="1"/><path d="M11.5 5.5l3.5 2-3.5 2z" fill="#7a7a7a"/><path d="M2 35.5h12" stroke="#7a7a7a" stroke-width="1"/><path d="M4.5 33.5l-3.5 2 3.5 2z" fill="#7a7a7a"/></svg>
<div style="left:1319px;top:116px;width:1px;height:280px;background:#b8b8b8"></div>
<div style="left:1320px;top:116px;width:30px;height:280px;background:#e4ffc7"></div>
<div style="left:1320px;top:221px;width:30px;height:5px;background:#308cc6"></div>
<div style="left:1350px;top:116px;width:2px;height:280px;background:#b2b2b2"></div>
<div style="left:1352px;top:116px;width:13px;height:280px;background:linear-gradient(90deg,#e0e0e0,#e7e7e7)"></div>
<div style="left:1352px;top:116px;width:13px;height:14px;background:linear-gradient(90deg,#fdfdfd,#f2f2f2);border-bottom:1px solid #b8b8b8"></div>
<svg style="left:1354.2px;top:120.2px" width="7.6" height="4" viewBox="0 0 7.6 4"><path d="M0 4l3.8-4 3.8 4z" fill="#4a4a4a"/></svg>
<div style="left:1352px;top:154px;width:13px;height:64px;background:linear-gradient(90deg,#fdfdfd,#f2f2f2);border-top:1px solid #b8b8b8;border-bottom:1px solid #b8b8b8"></div>
<div style="left:1352px;top:382px;width:13px;height:14px;background:linear-gradient(90deg,#fdfdfd,#f2f2f2);border-top:1px solid #b8b8b8"></div>
<svg style="left:1354.2px;top:387px" width="7.6" height="4" viewBox="0 0 7.6 4"><path d="M0 0l3.8 4 3.8-4z" fill="#4a4a4a"/></svg>
<div style="left:0;top:401px;width:681px;height:281px;border:1px solid #b6b6b6;background:#fff;overflow:hidden">
<div style="left:20px;top:0px;width:660px;height:14px;background:#eeeeee"></div>
<span class="m" style="left:22.8px;top:0px;width:656px;color:#000">Frame 187: 188 bytes on wire (1504 bits), 188 bytes captured (1504 bits) on interface \Device\NPF_{A1B2C3D4}, id 0</span>
<svg style="left:8px;top:3px" width="5" height="8" viewBox="0 0 5 8"><path d="M0.5 0l4 4-4 4z" fill="#585858"/></svg>
<div style="left:20px;top:14px;width:660px;height:14px;background:#eeeeee"></div>
<span class="m" style="left:22.8px;top:14px;width:656px;color:#000">Ethernet II, Src: IntelCor_34:10:25 (00:bb:60:34:10:25), Dst: zte_9a:2e:bf (b0:0a:d5:9a:2e:bf)</span>
<svg style="left:8px;top:17px" width="5" height="8" viewBox="0 0 5 8"><path d="M0.5 0l4 4-4 4z" fill="#585858"/></svg>
<div style="left:20px;top:28px;width:660px;height:14px;background:#eeeeee"></div>
<span class="m" style="left:22.8px;top:28px;width:656px;color:#000">Internet Protocol Version 4, Src: 192.168.1.152, Dst: 94.156.177.109</span>
<svg style="left:8px;top:31px" width="5" height="8" viewBox="0 0 5 8"><path d="M0.5 0l4 4-4 4z" fill="#585858"/></svg>
<div style="left:20px;top:42px;width:660px;height:14px;background:#eeeeee"></div>
<span class="m" style="left:22.8px;top:42px;width:656px;color:#000">Transmission Control Protocol, Src Port: 65242, Dst Port: 80, Seq: 1, Ack: 1, Len: 134</span>
<svg style="left:8px;top:45px" width="5" height="8" viewBox="0 0 5 8"><path d="M0.5 0l4 4-4 4z" fill="#585858"/></svg>
<div style="left:20px;top:56px;width:660px;height:14px;background:#7eb3f0"></div>
<span class="m" style="left:22.8px;top:56px;width:656px;color:#000">Hypertext Transfer Protocol</span>
<svg style="left:8px;top:59px" width="5" height="8" viewBox="0 0 5 8"><path d="M0.5 0l4 4-4 4z" fill="#585858"/></svg>
<div style="left:0;top:265px;width:679px;height:14px;background:#e2e2e2;border-top:1px solid #c0c0c0"></div>
<div style="left:0;top:265px;width:14px;height:14px;background:linear-gradient(#fdfdfd,#f0f0f0);border-top:1px solid #c0c0c0;border-right:1px solid #c0c0c0"></div>
<svg style="left:4px;top:269px" width="5" height="7" viewBox="0 0 5 7"><path d="M5 0L0.5 3.5 5 7z" fill="#505050"/></svg>
<div style="left:14px;top:265px;width:423px;height:14px;background:linear-gradient(#fefefe,#f1f1f1);border-top:1px solid #c0c0c0;border-right:1px solid #c0c0c0"></div>
<div style="left:665px;top:265px;width:14px;height:14px;background:linear-gradient(#fdfdfd,#f0f0f0);border-top:1px solid #c0c0c0;border-left:1px solid #c0c0c0"></div>
<svg style="left:670px;top:269px" width="5" height="7" viewBox="0 0 5 7"><path d="M0 0l4.5 3.5L0 7z" fill="#505050"/></svg>
</div>
<div style="left:676px;top:398px;width:17px;height:1px;background:repeating-linear-gradient(90deg,#b0b0b0 0 1px,transparent 1px 3px)"></div>
<div style="left:683px;top:535px;width:1px;height:17px;background:repeating-linear-gradient(#b0b0b0 0 1px,transparent 1px 3px)"></div>
<div style="left:685px;top:401px;width:681px;height:281px;border:1px solid #b6b6b6;background:#fff;overflow:hidden">
<div style="left:0;top:0;width:43px;height:300px;background:#efefef"></div>
<span class="m" style="left:7.2px;top:0px;color:#a0a0a0">0000</span>
<span class="m" style="left:50.3px;top:0px;color:#000">b0 0a d5 9a 2e bf 00 bb  60 34 10 25 08 00 45 00</span>
<span class="m" style="left:416px;top:0px;color:#000"><i>·</i><i>·</i><i>·</i><i>·</i>.<i>·</i><i>·</i><i>·</i></span>
<span class="m" style="left:481px;top:0px;color:#000">`4<i>·</i>%<i>·</i><i>·</i>E<i>·</i></span>
<span class="m" style="left:7.2px;top:14px;color:#a0a0a0">0010</span>
<span class="m" style="left:50.3px;top:14px;color:#000">00 ae cf 8b 40 00 80 06  58 74 c0 a8 01 98 5e 9c</span>
<span class="m" style="left:416px;top:14px;color:#000"><i>·</i><i>·</i><i>·</i><i>·</i>@<i>·</i><i>·</i><i>·</i></span>
<span class="m" style="left:481px;top:14px;color:#000">Xt<i>·</i><i>·</i><i>·</i><i>·</i>^<i>·</i></span>
<span class="m" style="left:7.2px;top:28px;color:#a0a0a0">0020</span>
<span class="m" style="left:50.3px;top:28px;color:#000">b1 6d fe da 00 50 9e 2d  6d a4 bd c1 8d ae 50 18</span>
<span class="m" style="left:416px;top:28px;color:#000"><i>·</i>m<i>·</i><i>·</i><i>·</i>P<i>·</i>-</span>
<span class="m" style="left:481px;top:28px;color:#000">m<i>·</i><i>·</i><i>·</i><i>·</i><i>·</i>P<i>·</i></span>
<span class="m" style="left:7.2px;top:42px;color:#a0a0a0">0030</span>
<span class="m" style="left:50.3px;top:42px;color:#000">00 ff 2e 6c 00 00 47 45  54 20 2f 63 6c 65 61 6e</span>
<span class="m" style="left:416px;top:42px;color:#000"><i>·</i><i>·</i>.l<i>·</i><i>·</i>GE</span>
<span class="m" style="left:481px;top:42px;color:#000">T /clean</span>
<span class="m" style="left:7.2px;top:56px;color:#a0a0a0">0040</span>
<span class="m" style="left:50.3px;top:56px;color:#000">20 48 54 54 50 2f 31 2e  31 0d 0a 48 6f 73 74 3a</span>
<span class="m" style="left:416px;top:56px;color:#000"> HTTP/1.</span>
<span class="m" style="left:481px;top:56px;color:#000">1<i>·</i><i>·</i>Host:</span>
<span class="m" style="left:7.2px;top:70px;color:#a0a0a0">0050</span>
<span class="m" style="left:50.3px;top:70px;color:#000">20 39 34 2e 31 35 36 2e  31 37 37 2e 31 30 39 0d</span>
<span class="m" style="left:416px;top:70px;color:#000"> 94.156.</span>
<span class="m" style="left:481px;top:70px;color:#000">177.109<i>·</i></span>
<span class="m" style="left:7.2px;top:84px;color:#a0a0a0">0060</span>
<span class="m" style="left:50.3px;top:84px;color:#000">0a 55 73 65 72 2d 41 67  65 6e 74 3a 20 57 67 65</span>
<span class="m" style="left:416px;top:84px;color:#000"><i>·</i>User-Ag</span>
<span class="m" style="left:481px;top:84px;color:#000">ent: Wge</span>
<span class="m" style="left:7.2px;top:98px;color:#a0a0a0">0070</span>
<span class="m" style="left:50.3px;top:98px;color:#000">74 2f 31 2e 32 31 2e 32  0d 0a 41 63 63 65 70 74</span>
<span class="m" style="left:416px;top:98px;color:#000">t/1.21.2</span>
<span class="m" style="left:481px;top:98px;color:#000"><i>·</i><i>·</i>Accept</span>
<span class="m" style="left:7.2px;top:112px;color:#a0a0a0">0080</span>
<span class="m" style="left:50.3px;top:112px;color:#000">3a 20 2a 2f 2a 0d 0a 41  63 63 65 70 74 2d 45 6e</span>
<span class="m" style="left:416px;top:112px;color:#000">: */*<i>·</i><i>·</i>A</span>
<span class="m" style="left:481px;top:112px;color:#000">ccept-En</span>
<span class="m" style="left:7.2px;top:126px;color:#a0a0a0">0090</span>
<span class="m" style="left:50.3px;top:126px;color:#000">63 6f 64 69 6e 67 3a 20  69 64 65 6e 74 69 74 79</span>
<span class="m" style="left:416px;top:126px;color:#000">coding: </span>
<span class="m" style="left:481px;top:126px;color:#000">identity</span>
<span class="m" style="left:7.2px;top:140px;color:#a0a0a0">00a0</span>
<span class="m" style="left:50.3px;top:140px;color:#000">0d 0a 43 6f 6e 6e 65 63  74 69 6f 6e 3a 20 4b 65</span>
<span class="m" style="left:416px;top:140px;color:#000"><i>·</i><i>·</i>Connec</span>
<span class="m" style="left:481px;top:140px;color:#000">tion: Ke</span>
<span class="m" style="left:7.2px;top:154px;color:#a0a0a0">00b0</span>
<span class="m" style="left:50.3px;top:154px;color:#000">65 70 2d 41 6c 69 76 65  0d 0a 0d 0a</span>
<span class="m" style="left:416px;top:154px;color:#000">ep-Alive</span>
<span class="m" style="left:481px;top:154px;color:#000"><i>·</i><i>·</i><i>·</i><i>·</i></span>
</div>
<div style="left:10px;top:686px;width:14px;height:14px;border-radius:7px;background:radial-gradient(circle at 42% 30%,#f08c8e,#dd4c53 75%);border:1px solid #7e2c32"></div>
<svg style="left:33.3px;top:685.2px" width="16" height="15" viewBox="0 0 16 15"><rect x="0.5" y="1.5" width="11" height="12.3" fill="#f6f6f6" stroke="#c6c6c6" stroke-width="0.8"/><rect x="1" y="2" width="10" height="3.4" fill="#3aa5e8"/><path d="M5.4 2.1c-1.1.6-1.8 1.8-2.1 3.3h2.9c-.6-1.1-.8-2.2-.8-3.3z" fill="#fff"/><path d="M2.2 8.2h6.4M2.2 11h6.4" stroke="#cdcdcd" stroke-width="0.9" stroke-dasharray="1.6 1"/><path d="M12.6 0.6l2 2-7.6 7.6-2.9 1 1-2.9z" fill="#3a3d3a"/></svg>
<div class="t" style="left:63.50px;top:685.50px;letter-spacing:0.192px;color:#000;">Hypertext Transfer Protocol: Protocol</div>
<div style="left:887px;top:687px;width:1px;height:14px;background:repeating-linear-gradient(#b8b8b8 0 1px,transparent 1px 2px)"></div>
<div class="t" style="left:900.50px;top:685.50px;letter-spacing:0.148px;color:#000;">Packets: 2019 · Displayed: 48 (2.4%)</div>
<div style="left:1259px;top:687px;width:1px;height:14px;background:repeating-linear-gradient(#b8b8b8 0 1px,transparent 1px 2px)"></div>
<div class="t" style="left:1272.30px;top:685.50px;letter-spacing:0.189px;color:#000;">Profile: Default</div>
<div style="left:739px;top:0px;width:325px;height:376px;background:#fff;border:1px solid #989898;box-shadow:1px 3px 14px rgba(0,0,0,0.32)"></div>
<div class="t" style="left:767.30px;top:3.50px;letter-spacing:0.150px;color:#000;"><u>M</u>ark/Unmark Packet</div>
<div class="t" style="left:973.10px;top:3.50px;letter-spacing:0.521px;color:#000;">Ctrl+M</div>
<div class="t" style="left:767.30px;top:26.50px;letter-spacing:0.139px;color:#000;"><u>I</u>gnore/Unignore Packet</div>
<div class="t" style="left:973.10px;top:26.50px;letter-spacing:0.573px;color:#000;">Ctrl+D</div>
<div class="t" style="left:767.30px;top:49.50px;letter-spacing:0.145px;color:#000;">Set/Unset Time Reference</div>
<div class="t" style="left:973.10px;top:49.50px;letter-spacing:0.497px;color:#000;">Ctrl+T</div>
<div class="t" style="left:767.30px;top:72.50px;letter-spacing:0.233px;color:#000;">Time Shift...</div>
<div class="t" style="left:973.10px;top:72.50px;letter-spacing:0.560px;color:#000;">Ctrl+Shift+T</div>
<div class="t" style="left:767.30px;top:95.50px;letter-spacing:0.128px;color:#000;">Packet Comments</div>
<svg style="left:1054px;top:100px" width="5" height="8" viewBox="0 0 5 8"><path d="M0.5 0l4 4-4 4z" fill="#404040"/></svg>
<div style="left:744px;top:115px;width:315px;height:1px;background:#c4c4c4"></div>
<div class="t" style="left:767.30px;top:120.50px;letter-spacing:0.111px;color:#000;">Edit Resolved Name</div>
<div style="left:744px;top:140px;width:315px;height:1px;background:#c4c4c4"></div>
<div class="t" style="left:767.30px;top:145.50px;letter-spacing:0.165px;color:#000;">Apply as Filter</div>
<svg style="left:1054px;top:150px" width="5" height="8" viewBox="0 0 5 8"><path d="M0.5 0l4 4-4 4z" fill="#404040"/></svg>
<div class="t" style="left:767.30px;top:168.50px;letter-spacing:0.058px;color:#000;">Prepare as Filter</div>
<svg style="left:1054px;top:173px" width="5" height="8" viewBox="0 0 5 8"><path d="M0.5 0l4 4-4 4z" fill="#404040"/></svg>
<div class="t" style="left:767.30px;top:191.50px;letter-spacing:0.198px;color:#000;">Conversation Filter</div>
<svg style="left:1054px;top:196px" width="5" height="8" viewBox="0 0 5 8"><path d="M0.5 0l4 4-4 4z" fill="#404040"/></svg>
<div class="t" style="left:767.30px;top:214.50px;letter-spacing:0.170px;color:#000;">Colorize Conversation</div>
<svg style="left:1054px;top:219px" width="5" height="8" viewBox="0 0 5 8"><path d="M0.5 0l4 4-4 4z" fill="#404040"/></svg>
<div class="t" style="left:767.30px;top:238.00px;font-size:12.0px;letter-spacing:-0.359px;color:#000;">SCTP</div>
<svg style="left:1054px;top:242px" width="5" height="8" viewBox="0 0 5 8"><path d="M0.5 0l4 4-4 4z" fill="#404040"/></svg>
<div style="left:739px;top:257px;width:325px;height:23px;background:#308cc6"></div>
<div class="t" style="left:767.30px;top:260.50px;letter-spacing:0.010px;color:#fff;">Follow</div>
<svg style="left:1054px;top:265px" width="5" height="8" viewBox="0 0 5 8"><path d="M0.5 0l4 4-4 4z" fill="#cfe3f3"/></svg>
<div class="t" style="left:767.30px;top:285.50px;letter-spacing:0.023px;color:#000;">Copy</div>
<svg style="left:1054px;top:290px" width="5" height="8" viewBox="0 0 5 8"><path d="M0.5 0l4 4-4 4z" fill="#404040"/></svg>
<div style="left:744px;top:305px;width:315px;height:1px;background:#c4c4c4"></div>
<div class="t" style="left:767.30px;top:310.50px;letter-spacing:0.068px;color:#000;">Protocol Preferences</div>
<svg style="left:1054px;top:315px" width="5" height="8" viewBox="0 0 5 8"><path d="M0.5 0l4 4-4 4z" fill="#404040"/></svg>
<div class="t" style="left:767.30px;top:333.50px;letter-spacing:0.130px;color:#000;">Decode As...</div>
<div class="t" style="left:767.30px;top:356.50px;letter-spacing:0.090px;color:#000;">Show Packet in New <u>W</u>indow</div>
<div style="left:1063px;top:257px;width:278px;height:184px;background:#fff;border:1px solid #989898;box-shadow:1px 3px 14px rgba(0,0,0,0.32)"></div>
<div class="t" style="left:1091.00px;top:260.50px;font-size:12.75px;letter-spacing:-0.042px;color:#000;">TCP Stream</div>
<div class="t" style="left:1222.30px;top:260.50px;letter-spacing:0.641px;color:#000;">Ctrl+Alt+Shift+T</div>
<div class="t" style="left:1091.00px;top:283.50px;letter-spacing:-0.023px;color:#bebebe;">UDP Stream</div>
<div class="t" style="left:1222.30px;top:283.50px;letter-spacing:0.641px;color:#bebebe;">Ctrl+Alt+Shift+U</div>
<div class="t" style="left:1091.00px;top:306.50px;font-size:12.75px;letter-spacing:-0.006px;color:#bebebe;">DCCP Stream</div>
<div class="t" style="left:1222.30px;top:306.50px;letter-spacing:0.610px;color:#bebebe;">Ctrl+Alt+Shift+E</div>
<div class="t" style="left:1091.00px;top:329.50px;letter-spacing:-0.047px;color:#bebebe;">TLS Stream</div>
<div class="t" style="left:1222.30px;top:329.50px;letter-spacing:0.613px;color:#bebebe;">Ctrl+Alt+Shift+S</div>
<div style="left:1063px;top:349px;width:278px;height:23px;background:#308cc6"></div>
<div class="t" style="left:1091.00px;top:352.50px;letter-spacing:-0.114px;color:#fff;">HTTP Stream</div>
<div class="t" style="left:1222.30px;top:352.50px;letter-spacing:0.656px;color:#fff;">Ctrl+Alt+Shift+H</div>
<div class="t" style="left:1091.00px;top:375.50px;letter-spacing:-0.049px;color:#bebebe;">HTTP/2 Stream</div>
<div class="t" style="left:1091.00px;top:398.50px;letter-spacing:-0.055px;color:#bebebe;">QUIC Stream</div>
<div class="t" style="left:1091.00px;top:422.00px;font-size:12.5px;letter-spacing:-0.043px;color:#bebebe;">SIP Call</div>
<svg style="left:1120px;top:365px;filter:drop-shadow(0 1px 1.5px rgba(0,0,0,0.35))" width="22" height="28" viewBox="1120 365 22 28"><path d="M1125.7 369.2L1137.2 381.2L1134.7 383.1L1134.5 388.8L1129.6 385.6L1125.7 386Z" fill="#4a4a4a" stroke="#fff" stroke-width="1" stroke-linejoin="round"/></svg>
</body></html>
